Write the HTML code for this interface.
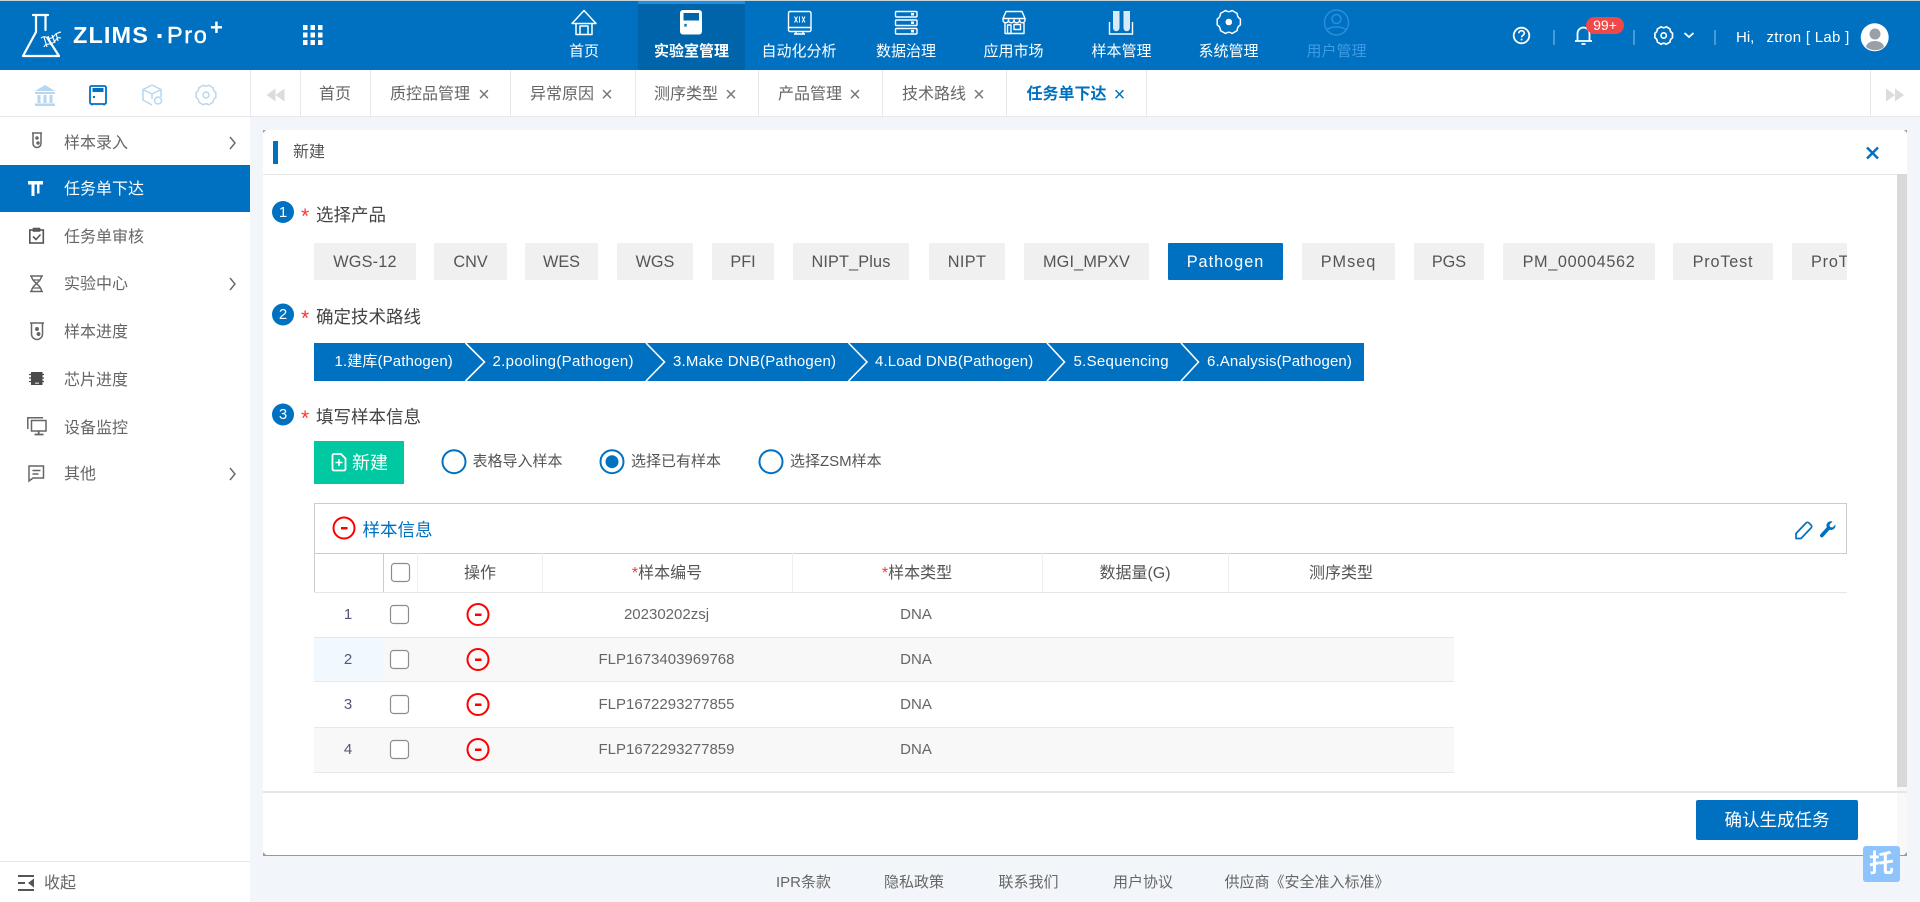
<!DOCTYPE html>
<html lang="zh"><head><meta charset="utf-8"><title>ZLIMS Pro+</title>
<style>
html,body{margin:0;padding:0;width:1920px;height:902px;overflow:hidden;background:#f2f5f9}
body{position:relative;font-family:"Liberation Sans","Noto Sans CJK SC",sans-serif;color:#666}
.b{position:absolute}
.t{position:absolute;white-space:nowrap;line-height:20px;height:20px}
.c{transform:translateX(-50%)}
.w{color:#fff}
.nav{font-size:15px;top:42px;color:#fff}
.tab{font-size:16px;top:85px;color:#666}
.x{font-size:20px;top:85px;color:#777}
.sv{position:absolute;top:0;left:0;pointer-events:none}
.side{font-size:16px;left:64px;color:#666}
.chip{position:absolute;top:243px;height:37px;line-height:39px;text-align:center;background:#f0f0f0;color:#555;font-size:16.25px;white-space:nowrap;overflow:hidden;border-radius:1px}
.h1{font-size:17.5px;left:316px;color:#444}
.st{font-size:15px;top:352px;color:#fff}
.rd{font-size:15px;top:452px;color:#555}
.th{font-size:16px;top:564px;color:#555}
.td{font-size:15px;color:#666}
.f{font-size:15px;top:873px;color:#666}
.ast{font-size:21px;color:#f33;left:301px}
</style></head><body>
<!-- backgrounds -->
<div class="b" style="left:0;top:0;width:1920px;height:1px;background:#c9d3da"></div>
<div class="b" style="left:0;top:1px;width:1920px;height:69px;background:#0071c1"></div>
<div class="b" style="left:638px;top:1px;width:107px;height:69px;background:#0064aa"></div>
<div class="b" style="left:638px;top:1px;width:107px;height:3px;background:#1a90ea"></div>
<div class="b" style="left:0;top:70px;width:1920px;height:46px;background:#fff;border-bottom:1px solid #e8e8e8"></div>
<div class="b" style="left:0;top:117px;width:250px;height:785px;background:#fff"></div>
<div class="b" style="left:0;top:165px;width:250px;height:47px;background:#0071c1"></div>
<div class="b" style="left:0;top:861px;width:250px;height:1px;background:#e8e8e8"></div>
<!-- tab separators -->
<div class="b" style="left:250px;top:70px;width:1px;height:46px;background:#e8e8e8"></div>
<div class="b" style="left:300px;top:70px;width:1px;height:46px;background:#e8e8e8"></div>
<div class="b" style="left:370px;top:70px;width:1px;height:46px;background:#e8e8e8"></div>
<div class="b" style="left:510px;top:70px;width:1px;height:46px;background:#e8e8e8"></div>
<div class="b" style="left:635px;top:70px;width:1px;height:46px;background:#e8e8e8"></div>
<div class="b" style="left:758px;top:70px;width:1px;height:46px;background:#e8e8e8"></div>
<div class="b" style="left:882px;top:70px;width:1px;height:46px;background:#e8e8e8"></div>
<div class="b" style="left:1006px;top:70px;width:1px;height:46px;background:#e8e8e8"></div>
<div class="b" style="left:1146px;top:70px;width:1px;height:46px;background:#e8e8e8"></div>
<div class="b" style="left:1870px;top:70px;width:1px;height:46px;background:#e8e8e8"></div>
<!-- panel -->
<div class="b" style="left:263px;top:130px;width:1644px;height:725px;background:#fff;border-bottom:1px solid #999"></div>
<div class="b" style="left:263px;top:174px;width:1644px;height:1px;background:#e8e8e8"></div>
<div class="b" style="left:273px;top:141px;width:5px;height:23px;background:#0071c1"></div>
<div class="b" style="left:1897px;top:174px;width:10px;height:613px;background:#d9d9d9"></div>
<div class="b" style="left:1897px;top:787px;width:10px;height:68px;background:#f8f8f8"></div>
<div class="b" style="left:263px;top:791px;width:1644px;height:2px;background:#e6e6e6"></div>
<div class="b" style="left:1696px;top:800px;width:162px;height:40px;background:#0071c1;border-radius:2px"></div>
<!-- chips -->
<div class="chip" style="left:314px;width:102px;letter-spacing:.2px">WGS-12</div>
<div class="chip" style="left:434px;width:73px">CNV</div>
<div class="chip" style="left:525px;width:73px">WES</div>
<div class="chip" style="left:617px;width:76px">WGS</div>
<div class="chip" style="left:712px;width:62px">PFI</div>
<div class="chip" style="left:793px;width:116px;letter-spacing:.15px">NIPT_Plus</div>
<div class="chip" style="left:929px;width:76px;letter-spacing:.4px">NIPT</div>
<div class="chip" style="left:1024px;width:125px;letter-spacing:.15px">MGI_MPXV</div>
<div class="chip" style="left:1168px;width:115px;background:#0071c1;color:#fff;letter-spacing:1px">Pathogen</div>
<div class="chip" style="left:1302px;width:93px;letter-spacing:1px">PMseq</div>
<div class="chip" style="left:1414px;width:70px">PGS</div>
<div class="chip" style="left:1503px;width:152px;letter-spacing:.65px">PM_00004562</div>
<div class="chip" style="left:1673px;width:100px;letter-spacing:.8px">ProTest</div>
<div class="chip" style="left:1792px;width:55px;text-align:left;text-indent:19px;letter-spacing:.8px">ProTest</div>
<!-- band -->
<div class="b" style="left:314px;top:343px;width:1050px;height:38px;background:#0071c1"></div>
<!-- button -->
<div class="b" style="left:314px;top:441px;width:90px;height:43px;background:#00c9a1"></div>
<!-- table -->
<div class="b" style="left:314px;top:503px;width:1531px;height:49px;border:1px solid #ccc"></div>
<div class="b" style="left:314px;top:553px;width:1px;height:39px;background:#ccc"></div>
<div class="b" style="left:383px;top:553px;width:1px;height:39px;background:#ccc"></div>
<div class="b" style="left:417px;top:553px;width:1px;height:39px;background:#eee"></div>
<div class="b" style="left:542px;top:553px;width:1px;height:39px;background:#eee"></div>
<div class="b" style="left:792px;top:553px;width:1px;height:39px;background:#eee"></div>
<div class="b" style="left:1042px;top:553px;width:1px;height:39px;background:#eee"></div>
<div class="b" style="left:1228px;top:553px;width:1px;height:39px;background:#eee"></div>
<div class="b" style="left:314px;top:592px;width:1533px;height:1px;background:#e6e6e6"></div>
<div class="b" style="left:314px;top:637px;width:1140px;height:45px;background:#f8f8f8;border-top:1px solid #e8e8e8;border-bottom:1px solid #e8e8e8;box-sizing:border-box"></div>
<div class="b" style="left:314px;top:638px;width:69px;height:43px;background:#f1f9fe"></div>
<div class="b" style="left:314px;top:727px;width:1140px;height:46px;background:#f8f8f8;border-top:1px solid #e8e8e8;border-bottom:1px solid #e8e8e8;box-sizing:border-box"></div>

<svg class="sv" width="1920" height="902" viewBox="0 0 1920 902" xmlns="http://www.w3.org/2000/svg" fill="none">
 <!-- logo -->
 <g stroke="#fff" stroke-width="2.200" stroke-linejoin="round" stroke-linecap="round">
  <path d="M33 15h15M36 15v17L23 56h36L47.500 38M45.500 15v15"/>
 </g>
 <g stroke="#fff" stroke-width="1.200">
  <path d="M41 38c5-4 8 3 12-1s4-4 8-5M44 47c2-5 6-1 10-5s3-5 7-4" opacity=".9"/>
  <path d="M44 37l3 10M48 36l3 9M52 35l3 8M56 33l2 8"/>
 </g>
 <rect x="157.500" y="34" width="4" height="4" fill="#fff"/>
 <!-- grid -->
 <g fill="#fff">
  <rect x="303" y="25" width="4.500" height="5"/><rect x="310.500" y="25" width="4.500" height="5"/><rect x="318" y="25" width="4.500" height="5"/>
  <rect x="303" y="32.500" width="4.500" height="5"/><rect x="310.500" y="32.500" width="4.500" height="5"/><rect x="318" y="32.500" width="4.500" height="5"/>
  <rect x="303" y="40" width="4.500" height="5"/><rect x="310.500" y="40" width="4.500" height="5"/><rect x="318" y="40" width="4.500" height="5"/>
 </g>
 <!-- nav icons -->
 <g stroke="#fff" stroke-width="1.500" stroke-linejoin="round">
  <path d="M584 10.500L572 23.500h4V34.500h16V23.500h4z"/><path d="M580 34v-8h8v8M576 23.500h16"/>
 </g>
 <rect x="680" y="10" width="22" height="24.500" rx="3" fill="#fff"/>
 <rect x="683.500" y="13" width="15.500" height="7.500" fill="#0064aa"/>
 <path d="M684.500 24l2 2.500m0-2.500l-2 2.500" stroke="#0064aa" stroke-width="1.100"/>
 <g stroke="#fff" stroke-width="1.400">
  <rect x="788.500" y="11.500" width="22.500" height="20" rx="1.500"/>
  <path d="M788.500 27.500h22.500"/>
  <path d="M796 32v1.500" /><path d="M803 32v1.500"/><path d="M794 34h11" stroke-width="1.600"/>
  <path d="M794.500 16.500l3 6m0-6l-3 6M802 16.500l3 6m0-6l-3 6M799.500 16.500v6" stroke-width="1"/>
 </g>
 <g stroke="#fff" stroke-width="1.400">
  <rect x="895.500" y="11.500" width="21.500" height="5.500" rx="1"/><rect x="895.500" y="20" width="21.500" height="5.500" rx="1"/><rect x="895.500" y="28.500" width="21.500" height="5.500" rx="1"/>
 </g>
 <g fill="#fff"><rect x="911" y="13" width="3" height="2.500"/><rect x="911" y="21.500" width="3" height="2.500"/><rect x="911" y="30" width="3" height="2.500"/></g>
 <g stroke="#fff" stroke-width="1.400" stroke-linejoin="round">
  <path d="M1006 11.500h16l3 7H1003z"/>
  <path d="M1003 18.500v1.500a2.500 2.500 0 0 0 5.500 0 2.500 2.500 0 0 0 5.500 0 2.500 2.500 0 0 0 5.500 0 2.500 2.500 0 0 0 5.500 0v-1.500"/>
  <path d="M1005 23v10.500h19V23"/>
  <rect x="1007.500" y="25" width="3.500" height="8.500"/><rect x="1014" y="24.500" width="6.500" height="5"/>
 </g>
 <g>
  <path d="M1109.500 22v12h23V22" stroke="#fff" stroke-width="1.400"/>
  <path d="M1113 11h6.500v17a3.200 3.200 0 0 1-6.500 0z" fill="#fff" fill-opacity=".85"/>
  <path d="M1123.500 11h6.500v17a3.200 3.200 0 0 1-6.500 0z" fill="#fff" fill-opacity=".85"/>
 </g>
 <g transform="translate(1228.800 22)" stroke="#fff" stroke-width="1.500" stroke-linejoin="round">
  <path d="M11.600 -2.900L11.600 2.900Q8.500 4.500 8.300 8.600L3.300 11.500Q0 9 -3.300 11.500L-8.300 8.600Q-8.500 4.500 -11.600 2.900L-11.600 -2.900Q-8.500 -4.500 -8.300 -8.600L-3.300 -11.500Q0 -9 3.300 -11.500L8.300 -8.600Q8.500 -4.500 11.600 -2.900Z"/><circle r="3.300" fill="#fff" stroke="none"/>
 </g>
 <g stroke="#2a8fda" stroke-width="1.500">
  <ellipse cx="1336.500" cy="22.500" rx="12" ry="12.500"/><circle cx="1336.500" cy="19" r="4.500"/><path d="M1327 30c3-4 16-4 19 0"/>
 </g>
 <!-- right header -->
 <circle cx="1521.500" cy="35.500" r="7.800" stroke="#fff" stroke-width="1.800"/>
 <path d="M1518.800 33.300c0-3.500 5.500-3.500 5.500 0 0 2-2.700 2-2.700 4" stroke="#fff" stroke-width="1.600"/><circle cx="1521.600" cy="39.500" r="1" fill="#fff"/>
 <path d="M1554 30v15M1634 30v15M1715 30v15" stroke="#7fb6de" stroke-width="1.200"/>
 <path d="M1575 41h17M1577.500 41V33.500a6 6 0 0 1 12 0V41" stroke="#fff" stroke-width="1.800"/><path d="M1581.500 44h4" stroke="#fff" stroke-width="1.800"/>
 <g transform="translate(1663.700 35.500) scale(.76)" stroke="#fff" stroke-width="2.200" stroke-linejoin="round">
  <path d="M11.600 -2.900L11.600 2.900Q8.500 4.500 8.300 8.600L3.300 11.500Q0 9 -3.300 11.500L-8.300 8.600Q-8.500 4.500 -11.600 2.900L-11.600 -2.900Q-8.500 -4.500 -8.300 -8.600L-3.300 -11.500Q0 -9 3.300 -11.500L8.300 -8.600Q8.500 -4.500 11.600 -2.900Z"/><circle r="3.500"/>
 </g>
 <path d="M1684.500 33l4.500 4 4.500-4" stroke="#fff" stroke-width="1.800"/>
 <circle cx="1874.700" cy="37.300" r="14" fill="#fff"/>
 <circle cx="1875" cy="34" r="5.500" fill="#9a9fa8"/>
 <path d="M1866 47c1-8 17-8 18 0a14 14 0 0 1-18 0z" fill="#9a9fa8"/>
 <!-- tool row icons -->
 <g fill="#b7d6ef">
  <path d="M45 85l10 6H35z"/><rect x="35" y="92" width="20" height="2"/><rect x="37.500" y="95" width="3" height="8"/><rect x="43.500" y="95" width="3" height="8"/><rect x="49.500" y="95" width="3" height="8"/><rect x="35" y="103.500" width="20" height="2.500"/>
 </g>
 <rect x="90" y="86" width="16" height="18" rx="1.500" stroke="#0071c1" stroke-width="1.800"/>
 <rect x="92.500" y="88" width="11" height="4" fill="#0071c1"/><rect x="93" y="96" width="2" height="2" fill="#0071c1"/><path d="M92 104v1.500M104 104v1.500" stroke="#0071c1" stroke-width="1.500"/>
 <g stroke="#b7d6ef" stroke-width="1.500" stroke-linejoin="round">
  <path d="M152 85l9 4.500v7.500M152 85l-9 4.500v10.500l9 5M143 89.500l9 4.500 9-4.500M152 94v5"/><circle cx="158" cy="100.500" r="3.500"/>
 </g>
 <g transform="translate(206 95) scale(.85)" stroke="#b7d6ef" stroke-width="1.700" stroke-linejoin="round">
  <path d="M11.600 -2.900L11.600 2.900Q8.500 4.500 8.300 8.600L3.300 11.500Q0 9 -3.300 11.500L-8.300 8.600Q-8.500 4.500 -11.600 2.900L-11.600 -2.900Q-8.500 -4.500 -8.300 -8.600L-3.300 -11.500Q0 -9 3.300 -11.500L8.300 -8.600Q8.500 -4.500 11.600 -2.900Z"/><circle r="3.500"/>
 </g>
 <path d="M275.500 88.500v13l-9-6.500zM284.500 88.500v13l-9-6.500z" fill="#dcdcdc"/>
 <path d="M1886 88.500v13l9-6.500zM1895 88.500v13l9-6.500z" fill="#dcdcdc"/>
 <!-- sidebar icons -->
 <g stroke="#666" stroke-width="1.500">
  <path d="M32 133h10M33 133v10.500a4 4 0 0 0 8 0V133"/><circle cx="37" cy="138" r="1" fill="#666"/><circle cx="38" cy="143" r="1" fill="#666"/>
 </g>
 <path d="M28 181h15v3.500h-3.500v9h-2.500v-9h-2.500v11.500h-3V184.500H28z" fill="#fff"/>
 <g stroke="#555" stroke-width="1.600"><rect x="29.800" y="230" width="13.500" height="13"/><path d="M33.500 228.500h6v2.500h-6zM33 236.500l3 3 4.500-5"/></g>
 <g stroke="#666" stroke-width="1.500"><path d="M30 276h13M30 291.500h13M31.500 276c0 6 10 9 10 15.500M41.500 276c0 6-10 9-10 15.500"/><path d="M33 280h7M33 288h7" stroke-width="1.200"/></g>
 <g stroke="#666" stroke-width="1.500"><path d="M30 323h14M31.500 323v11a5.300 5.300 0 0 0 11 0v-11"/><circle cx="37" cy="329" r="1.200" fill="#666"/><circle cx="38.500" cy="334" r="1.200" fill="#666"/></g>
 <g><rect x="31" y="372" width="11.500" height="13" fill="#4a4a4a"/><path d="M29 374.500h15M29 378h15M29 381.500h15" stroke="#4a4a4a" stroke-width="1.300" stroke-dasharray="3 9"/><rect x="35" y="382.500" width="4" height="1.500" fill="#bbb"/></g>
 <g stroke="#666" stroke-width="1.500"><path d="M27.800 429v-11.300H43"/><rect x="31.500" y="420.500" width="14.500" height="10.500"/><path d="M34.500 434.500h9M38.700 431v3" stroke-width="1.800"/></g>
 <g stroke="#666" stroke-width="1.500"><path d="M29 466h14.500v12H33l-4 3z"/><path d="M32.500 470.500h8M32.500 474h6"/></g>
 <path d="M230 137l5 6-5 6M230 278l5 6-5 6M230 468l5 6-5 6" stroke="#666" stroke-width="1.400"/>
 <path d="M18 876h16M18 890h16M18 883h7" stroke="#555" stroke-width="2"/><path d="M28 883l6-4.500v9z" fill="#555"/>
 <!-- panel close -->
 <path d="M1867 147.500l11 11m0-11l-11 11" stroke="#0071c1" stroke-width="2.400"/>
 <!-- steps -->
 <circle cx="283" cy="212" r="11" fill="#0071c1"/><circle cx="283" cy="314.500" r="11" fill="#0071c1"/><circle cx="283" cy="414.500" r="11" fill="#0071c1"/>
 <!-- chevrons -->
 <g stroke="#fff" stroke-width="1.600">
  <path d="M465.500 343L484.500 362 465.500 381M646 343L664.500 362 646 381M848.500 343L867 362 848.500 381M1047 343L1064.500 362 1047 381M1181 343L1198.500 362 1181 381"/>
 </g>
 <!-- new doc icon -->
 <path d="M334 454h7l4.500 4.500v10.500a1.500 1.500 0 0 1-1.500 1.500h-10a1.500 1.500 0 0 1-1.500-1.500v-13.500a1.500 1.500 0 0 1 1.500-1.500z" stroke="#fff" stroke-width="1.800"/>
 <path d="M339 459v7M335.500 462.500h7" stroke="#fff" stroke-width="1.600"/>
 <!-- radios -->
 <circle cx="454" cy="461.700" r="11.500" stroke="#0071c1" stroke-width="2" fill="#fff"/>
 <circle cx="612" cy="461.700" r="11.500" stroke="#0071c1" stroke-width="2" fill="#fff"/><circle cx="612" cy="461.700" r="6.500" fill="#0071c1"/>
 <circle cx="771" cy="461.700" r="11.500" stroke="#0071c1" stroke-width="2" fill="#fff"/>
 <!-- minus icons -->
 <g stroke="#f00" stroke-width="2"><circle cx="344" cy="528" r="10.500"/><circle cx="478" cy="614.500" r="10.500"/><circle cx="478" cy="659.500" r="10.500"/><circle cx="478" cy="704.500" r="10.500"/><circle cx="478" cy="749.500" r="10.500"/></g>
 <g fill="#f00"><rect x="341" y="527" width="6.500" height="2.500"/><rect x="475" y="613.500" width="6.500" height="2.500"/><rect x="475" y="658.500" width="6.500" height="2.500"/><rect x="475" y="703.500" width="6.500" height="2.500"/><rect x="475" y="748.500" width="6.500" height="2.500"/></g>
 <!-- checkboxes -->
 <g stroke="#8c8c8c" stroke-width="1.200" fill="#fff">
  <rect x="391.500" y="563.500" width="18" height="18" rx="3"/>
  <rect x="390.500" y="605.500" width="18" height="18" rx="3"/>
  <rect x="390.500" y="650.500" width="18" height="18" rx="3"/>
  <rect x="390.500" y="695.500" width="18" height="18" rx="3"/>
  <rect x="390.500" y="740.500" width="18" height="18" rx="3"/>
 </g>
 <!-- pencil/wrench -->
 <path d="M1796 538.500v-5l10-10.500a2 2 0 0 1 3 0l2 2a2 2 0 0 1 0 3l-10 10.500z" stroke="#0071c1" stroke-width="1.700" stroke-linejoin="round"/>
 <path d="M1835.500 524.500l-3 3-2.500-.5-.5-2.500 3-3c-3-.8-6 1-6 4 0 .8.100 1.300.3 1.800l-6.300 7a1.800 1.800 0 0 0 2.700 2.500l6.300-7c3.200 1 6-1.500 6-4 0-.6-.1-1.300-.5-1.800z" fill="#0071c1"/>
 <!-- resize corners -->
 <path d="M263 130h3l-3 3zM1907 130h-3l3 3zM263 855v-3l3 3zM1907 855v-3l-3 3z" fill="#a0a0a0"/>
</svg>

<!-- widget -->
<div class="b" style="left:1863px;top:846px;width:37px;height:36px;background:#8cc4fb;border-radius:3px;color:#fff;font-size:25px;font-weight:bold;line-height:36px;text-align:center">托</div>

<!-- logo text -->
<div class="t" style="left:73px;top:25px;font-size:23.500px;font-weight:bold;color:#fff;letter-spacing:1.100px">ZLIMS</div>
<div class="t" style="left:167px;top:25px;font-size:23.500px;color:#fff;letter-spacing:1.600px;-webkit-text-stroke:.4px #fff">Pro</div>
<div class="t" style="left:210px;top:18px;font-size:22px;font-weight:bold;color:#fff">+</div>

<!-- nav labels -->
<div class="t c nav" style="left:584px">首页</div>
<div class="t c nav" style="left:691.500px;font-weight:bold">实验室管理</div>
<div class="t c nav" style="left:799px">自动化分析</div>
<div class="t c nav" style="left:906px">数据治理</div>
<div class="t c nav" style="left:1013.500px">应用市场</div>
<div class="t c nav" style="left:1121.500px">样本管理</div>
<div class="t c nav" style="left:1228.500px">系统管理</div>
<div class="t c nav" style="left:1336.500px;color:#3c9be2">用户管理</div>

<!-- header right -->
<div class="b" style="left:1586px;top:17px;width:38px;height:17px;background:#f04848;border-radius:9px;color:#fff;font-size:14px;line-height:17px;text-align:center">99+</div>
<div class="t w" style="left:1736px;top:28px;font-size:15px">Hi,</div>
<div class="t w" style="left:1766.500px;top:28px;font-size:15px;letter-spacing:.3px">ztron [ Lab ]</div>

<!-- tabs -->
<div class="t c tab" style="left:335px">首页</div>
<div class="t tab" style="left:390px">质控品管理</div><div class="t c x" style="left:484px">×</div>
<div class="t tab" style="left:530px">异常原因</div><div class="t c x" style="left:607px">×</div>
<div class="t tab" style="left:654px">测序类型</div><div class="t c x" style="left:731px">×</div>
<div class="t tab" style="left:778px">产品管理</div><div class="t c x" style="left:855px">×</div>
<div class="t tab" style="left:902px">技术路线</div><div class="t c x" style="left:979px">×</div>
<div class="t tab" style="left:1026.500px;color:#0071c1;font-weight:bold">任务单下达</div><div class="t c x" style="left:1119.500px;color:#0071c1">×</div>

<!-- sidebar labels -->
<div class="t side" style="top:134px">样本录入</div>
<div class="t side" style="top:180px;color:#fff">任务单下达</div>
<div class="t side" style="top:228px">任务单审核</div>
<div class="t side" style="top:275px">实验中心</div>
<div class="t side" style="top:323px">样本进度</div>
<div class="t side" style="top:371px">芯片进度</div>
<div class="t side" style="top:419px">设备监控</div>
<div class="t side" style="top:465px">其他</div>
<div class="t" style="left:44px;top:874px;font-size:16px;color:#666">收起</div>

<!-- panel head -->
<div class="t" style="left:293px;top:143px;font-size:16px;color:#555">新建</div>

<!-- step headings -->
<div class="t c" style="left:283px;top:202.500px;font-size:15px;color:#fff">1</div>
<div class="t c" style="left:283px;top:305px;font-size:15px;color:#fff">2</div>
<div class="t c" style="left:283px;top:405px;font-size:15px;color:#fff">3</div>
<div class="t ast" style="top:207px">*</div>
<div class="t ast" style="top:309px">*</div>
<div class="t ast" style="top:409px">*</div>
<div class="t h1" style="top:205px">选择产品</div>
<div class="t h1" style="top:306.500px">确定技术路线</div>
<div class="t h1" style="top:407px">填写样本信息</div>

<!-- route -->
<div class="t st" style="left:334.500px;letter-spacing:.12px">1.建库(Pathogen)</div>
<div class="t st" style="left:492.500px;letter-spacing:.33px">2.pooling(Pathogen)</div>
<div class="t st" style="left:673px;letter-spacing:.2px">3.Make DNB(Pathogen)</div>
<div class="t st" style="left:875px;letter-spacing:.12px">4.Load DNB(Pathogen)</div>
<div class="t st" style="left:1073.500px;letter-spacing:.3px">5.Sequencing</div>
<div class="t st" style="left:1207px;letter-spacing:.12px">6.Analysis(Pathogen)</div>

<!-- new + radios -->
<div class="t w" style="left:352px;top:453px;font-size:18px">新建</div>
<div class="t rd" style="left:472.500px">表格导入样本</div>
<div class="t rd" style="left:631px">选择已有样本</div>
<div class="t rd" style="left:790px">选择ZSM样本</div>

<!-- table text -->
<div class="t" style="left:362.500px;top:520px;font-size:17.500px;color:#0071c1">样本信息</div>
<div class="t c th" style="left:480px">操作</div>
<div class="t c th" style="left:667px"><span style="color:#f33">*</span>样本编号</div>
<div class="t c th" style="left:917px"><span style="color:#f33">*</span>样本类型</div>
<div class="t c th" style="left:1135px">数据量(G)</div>
<div class="t c th" style="left:1341px">测序类型</div>

<div class="t c td" style="left:348px;top:605px;color:#557">1</div>
<div class="t c td" style="left:666.500px;top:605px">20230202zsj</div>
<div class="t c td" style="left:916px;top:605px">DNA</div>
<div class="t c td" style="left:348px;top:650px;color:#557">2</div>
<div class="t c td" style="left:666.500px;top:650px">FLP1673403969768</div>
<div class="t c td" style="left:916px;top:650px">DNA</div>
<div class="t c td" style="left:348px;top:695px;color:#557">3</div>
<div class="t c td" style="left:666.500px;top:695px">FLP1672293277855</div>
<div class="t c td" style="left:916px;top:695px">DNA</div>
<div class="t c td" style="left:348px;top:740px;color:#557">4</div>
<div class="t c td" style="left:666.500px;top:740px">FLP1672293277859</div>
<div class="t c td" style="left:916px;top:740px">DNA</div>

<div class="t c w" style="left:1777px;top:810px;font-size:17.500px">确认生成任务</div>

<!-- footer -->
<div class="t c f" style="left:803.500px">IPR条款</div>
<div class="t c f" style="left:914px">隐私政策</div>
<div class="t c f" style="left:1028.500px">联系我们</div>
<div class="t c f" style="left:1143px">用户协议</div>
<div class="t c f" style="left:1307px">供应商《安全准入标准》</div>
</body></html>
